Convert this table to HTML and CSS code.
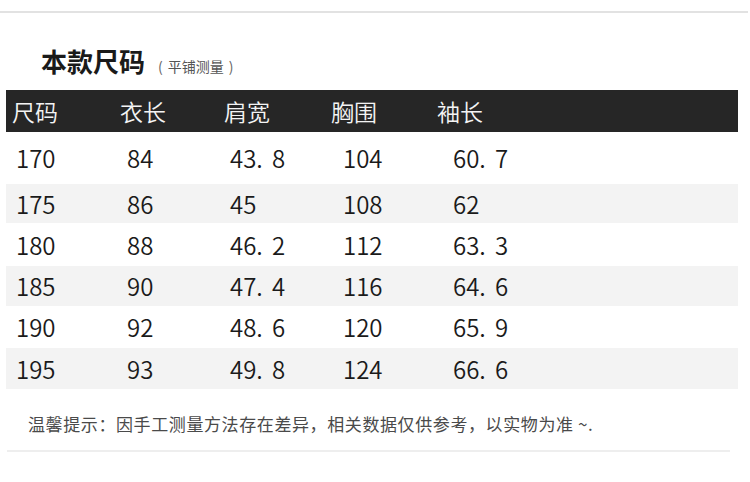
FILE: index.html
```html
<!DOCTYPE html>
<html lang="zh-CN">
<head>
<meta charset="utf-8">
<link rel="stylesheet" href="styles.css">
</head>
<body>
<div class="page">
  <div class="topline"></div>
  <div class="title">
    <span class="title-main">本款尺码</span>
    <span class="title-sub"><span class="paren">(</span>平铺测量<span class="paren">)</span></span>
  </div>
  <div class="table">
    <div class="head">
      <div>尺码</div><div>衣长</div><div>肩宽</div><div>胸围</div><div>袖长</div>
    </div>
    <div class="row r1">
      <div>170</div><div>84</div><div>43<span class="dot">.</span>8</div><div>104</div><div>60<span class="dot">.</span>7</div>
    </div>
    <div class="row r2 alt">
      <div>175</div><div>86</div><div>45</div><div>108</div><div>62</div>
    </div>
    <div class="row r3">
      <div>180</div><div>88</div><div>46<span class="dot">.</span>2</div><div>112</div><div>63<span class="dot">.</span>3</div>
    </div>
    <div class="row r4 alt">
      <div>185</div><div>90</div><div>47<span class="dot">.</span>4</div><div>116</div><div>64<span class="dot">.</span>6</div>
    </div>
    <div class="row r5">
      <div>190</div><div>92</div><div>48<span class="dot">.</span>6</div><div>120</div><div>65<span class="dot">.</span>9</div>
    </div>
    <div class="row r6 alt">
      <div>195</div><div>93</div><div>49<span class="dot">.</span>8</div><div>124</div><div>66<span class="dot">.</span>6</div>
    </div>
  </div>
  <div class="note">温馨提示：因手工测量方法存在差异，相关数据仅供参考，以实物为准 ~.</div>
  <div class="bottomline"></div>
</div>
</body>
</html>
```
FILE: styles.css
```css
html, body {
  margin: 0;
  padding: 0;
  background: #ffffff;
}
body {
  font-family: "Noto Sans CJK SC", "Noto Sans", sans-serif;
  color: #1e1e1e;
}
.page {
  width: 750px;
  height: 482px;
  overflow: hidden;
}
.topline {
  margin-top: 11px;
  width: 748px;
  height: 2px;
  background: #e2e2e2;
}
.title {
  display: flex;
  align-items: baseline;
  margin-top: 33px;
  margin-left: 41px;
  height: 44px;
}
.title-main {
  font-size: 26px;
  font-weight: 700;
  line-height: 30px;
  color: #1a1a1a;
}
.title-sub {
  font-size: 14px;
  color: #555;
  margin-left: 8px;
}
.paren {
  display: inline-block;
  margin: 0 5px;
  color: #666;
}
.table {
  margin-left: 6px;
  width: 732px;
}
.head {
  display: grid;
  grid-template-columns: 108px 104px 107px 106px 1fr;
  height: 42px;
  align-items: center;
  background: #262626;
  color: #f4f4f4;
  font-size: 23px;
  font-weight: 350;
  line-height: 1;
}
.head > div {
  padding-left: 6px;
}
.row {
  display: grid;
  grid-template-columns: 111px 103px 113px 110px 1fr;
  align-items: center;
  font-size: 24px;
  font-weight: 350;
  line-height: 1;
  color: #1a1a1a;
}
.row > div {
  padding-left: 10px;
}
.alt {
  background: #f3f3f3;
}
.r1 { height: 52px; }
.r2 { height: 39px; }
.r3 { height: 43px; }
.r4 { height: 40px; }
.r5 { height: 42px; }
.r6 { height: 41px; }
.dot {
  margin-right: 0.38em;
}
.note {
  margin-top: 23px;
  margin-left: 28px;
  font-size: 17px;
  letter-spacing: 0.6px;
  line-height: 24px;
  color: #4a4a4a;
}
.bottomline {
  margin-top: 14px;
  margin-left: 7px;
  width: 723px;
  height: 2px;
  background: #eeeeee;
}
```
